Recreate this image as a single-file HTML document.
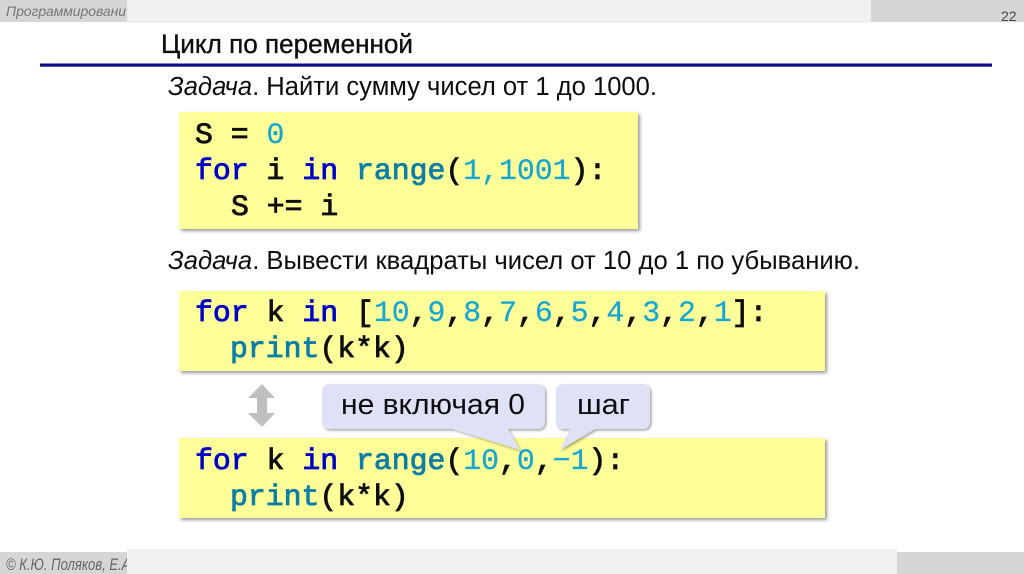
<!DOCTYPE html>
<html lang="ru">
<head>
<meta charset="utf-8">
<title>Цикл по переменной</title>
<style>
html,body{margin:0;padding:0;background:#fff;width:1024px;height:574px;overflow:hidden}
svg{display:block}
text{font-family:"Liberation Sans",sans-serif;white-space:pre}
.m{font-family:"Liberation Mono",monospace;font-size:29.8px;fill:#111;stroke:#111;stroke-width:.85px}
.k{fill:#0000c8;stroke:#0000c8}.f{fill:#0f7ea6;stroke:#0f7ea6}.n{fill:#14a6d2;stroke:#14a6d2;stroke-width:.25px}
</style>
</head>
<body>
<svg width="1024" height="574" viewBox="0 0 1024 574" xmlns="http://www.w3.org/2000/svg">
<defs>
<filter id="s" x="-5%" y="-10%" width="110%" height="125%"><feDropShadow dx="2" dy="2" stdDeviation="1.5" flood-color="#000" flood-opacity=".4"/></filter>
<filter id="s2" x="-10%" y="-10%" width="120%" height="125%"><feDropShadow dx="1.5" dy="1.5" stdDeviation="1.2" flood-color="#000" flood-opacity=".35"/></filter>
<filter id="b" x="0" y="0" width="100%" height="100%"><feGaussianBlur stdDeviation=".35"/></filter>
<clipPath id="hc"><rect x="0" y="0" width="127" height="23"/></clipPath>
<clipPath id="fc"><rect x="0" y="550" width="127" height="24"/></clipPath>
</defs>
<rect width="1024" height="574" fill="#fff"/>
<g filter="url(#b)">
<!-- header -->
<rect x="127" y="0" width="744" height="23" fill="#f0f0f0"/>
<rect x="0" y="0" width="127" height="22" fill="#d6d6d6"/>
<rect x="871" y="0" width="153" height="22" fill="#d6d6d6"/>
<g clip-path="url(#hc)"><text x="6" y="16" font-size="14" font-style="italic" fill="#777" textLength="120" lengthAdjust="spacing">Программировани</text></g>
<text x="1001" y="21" font-size="14" fill="#444">22</text>

<!-- title -->
<text x="161" y="53" font-size="26.5" fill="#111" stroke="#111" stroke-width=".35" textLength="252" lengthAdjust="spacingAndGlyphs">Цикл по переменной</text>
<rect x="40" y="63.5" width="952" height="3.2" fill="#0a0a8c"/>

<!-- task 1 -->
<text x="168" y="95" font-size="26.3" fill="#111" textLength="489" lengthAdjust="spacingAndGlyphs"><tspan font-style="italic">Задача</tspan>. Найти сумму чисел от 1 до 1000.</text>

<!-- code 1 -->
<rect x="179" y="112" width="459" height="117" fill="#ffff99" filter="url(#s)"/>
<text class="m" x="195" y="143">S = <tspan class="n">0</tspan></text>
<text class="m" x="195" y="179"><tspan class="k">for</tspan> i <tspan class="k">in</tspan> <tspan class="f">range</tspan>(<tspan class="n">1,1001</tspan>):</text>
<text class="m" x="231" y="215">S += i</text>

<!-- task 2 -->
<text x="168" y="269" font-size="26" fill="#111" textLength="692" lengthAdjust="spacingAndGlyphs"><tspan font-style="italic">Задача</tspan>. Вывести квадраты чисел от 10 до 1 по убыванию.</text>

<!-- code 2 -->
<rect x="179" y="291" width="646" height="80" fill="#ffff99" filter="url(#s)"/>
<text class="m" x="195" y="321"><tspan class="k">for</tspan> k <tspan class="k">in</tspan> [<tspan class="n">10</tspan>,<tspan class="n">9</tspan>,<tspan class="n">8</tspan>,<tspan class="n">7</tspan>,<tspan class="n">6</tspan>,<tspan class="n">5</tspan>,<tspan class="n">4</tspan>,<tspan class="n">3</tspan>,<tspan class="n">2</tspan>,<tspan class="n">1</tspan>]:</text>
<text class="m" x="230" y="357"><tspan class="f">print</tspan>(k*k)</text>

<!-- code 3 -->
<rect x="179" y="438" width="646" height="80" fill="#ffff99" filter="url(#s)"/>
<text class="m" x="195" y="469"><tspan class="k">for</tspan> k <tspan class="k">in</tspan> <tspan class="f">range</tspan>(<tspan class="n">10</tspan>,<tspan class="n">0</tspan>,<tspan class="n">−1</tspan>):</text>
<text class="m" x="230" y="505"><tspan class="f">print</tspan>(k*k)</text>

<!-- double arrow -->
<path d="M262 384 L275 398 H267 V413 H275 L262 427 L248 413 H257 V398 H248 Z" fill="#bfbfbf"/>

<!-- callouts -->
<path d="M330 384 H537 Q545 384 545 392 V421 Q545 429 537 429 H508 L520 450 L453 429 H330 Q322 429 322 421 V392 Q322 384 330 384 Z" fill="#dfe2f7" filter="url(#s2)"/>
<text x="341" y="414" font-size="28.5" fill="#111" textLength="184" lengthAdjust="spacingAndGlyphs">не включая 0</text>
<path d="M564 384 H642 Q650 384 650 392 V421 Q650 429 642 429 H595 L560 450 L570 429 H564 Q556 429 556 421 V392 Q556 384 564 384 Z" fill="#dfe2f7" filter="url(#s2)"/>
<text x="577" y="414" font-size="28.5" fill="#111" textLength="53" lengthAdjust="spacingAndGlyphs">шаг</text>

<!-- footer -->
<rect x="0" y="552" width="127" height="22" fill="#d6d6d6"/>
<rect x="897" y="552" width="127" height="22" fill="#d6d6d6"/>
<rect x="127" y="549" width="770" height="25" fill="#f0f0f0"/>
<g clip-path="url(#fc)"><text x="6" y="570" font-size="17" font-style="italic" fill="#666" textLength="128" lengthAdjust="spacingAndGlyphs">© К.Ю. Поляков, Е.А.</text></g>
</g>
</svg>
</body>
</html>
